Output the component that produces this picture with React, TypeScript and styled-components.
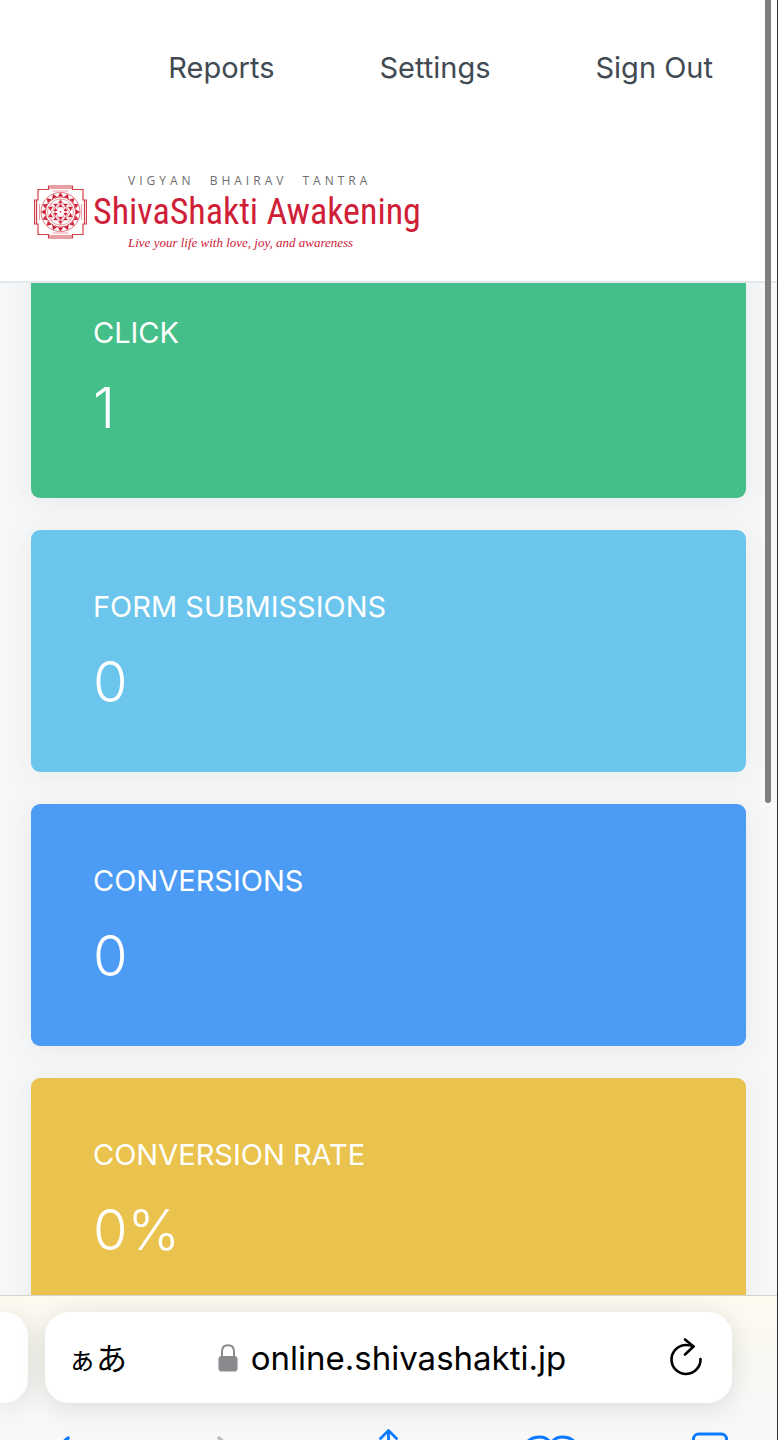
import React from "react";
import styled, { createGlobalStyle } from "styled-components";

const GlobalStyle = createGlobalStyle`
  *, *::before, *::after { box-sizing: border-box; }
  body { margin: 0; background: #f5f7f9; font-family: Inter, "Noto Sans CJK JP", sans-serif; }
  h2, p { margin: 0; font-weight: 400; }
  button { padding: 0; border: 0; background: none; font: inherit; color: inherit; }
  svg { display: block; }
`;

const Screen = styled.div`
  position: relative;
  display: flex;
  flex-direction: column;
  height: 100vh;
  overflow: hidden;
  border-right: 1px solid #2f3133;
`;

const ScrollThumb = styled.div`
  position: absolute;
  z-index: 3;
  top: 0;
  right: 6px;
  width: 6px;
  height: calc(56vh - 3px);
  border-radius: 0 0 3px 3px;
  background: #7e7e7e;
`;

const Header = styled.header`
  position: relative;
  z-index: 1;
  flex: none;
  padding: 48px 64px 30px 34px;
  background: #fff;
  border-bottom: 2px solid #e4e8ec;
`;

const Nav = styled.nav`
  display: flex;
  justify-content: flex-end;
  gap: 105px;
  margin-bottom: 85px;
`;

const NavLink = styled.a`
  color: #414a52;
  font-size: 29px;
  line-height: 40px;
  text-decoration: none;
  white-space: nowrap;
`;

const Brand = styled.a`
  display: inline-flex;
  align-items: center;
  gap: 6px;
  color: #cf2038;
  text-decoration: none;
  white-space: nowrap;
`;

const BrandText = styled.span`
  display: flex;
  flex-direction: column;
`;

const BrandTop = styled.span`
  padding-left: 35px;
  color: #6d6d6d;
  font: 12px/16px "Open Sans", sans-serif;
  letter-spacing: 4px;
  word-spacing: 8px;
`;

const BrandName = styled.span`
  font: 36px/46px "Roboto Condensed", "Liberation Sans Narrow", "Liberation Sans", sans-serif;
`;

const BrandTagline = styled.span`
  padding-left: 35px;
  font: italic 13px/16px "Liberation Serif", serif;
`;

const Main = styled.main`
  flex: 1;
  min-height: 0;
  padding: 0 31px;
  overflow: hidden;
`;

const CardList = styled.div`
  display: flex;
  flex-direction: column;
  gap: 32px;
  margin-top: -27px;
`;

const Card = styled.section<{ $tone: string }>`
  padding: 56px 62px;
  border-radius: 9px;
  background: ${(p) => p.$tone};
  box-shadow: 0 4px 28px rgba(60, 50, 50, 0.07);
  color: #fff;
`;

const CardLabel = styled.h2`
  margin-bottom: 20px;
  font-size: 29px;
  line-height: 42px;
`;

const CardValue = styled.p`
  font-size: 56px;
  font-weight: 300;
  line-height: 68px;
`;

const BrowserBar = styled.footer`
  position: relative;
  z-index: 1;
  flex: none;
  height: 145px;
  overflow: hidden;
  border-top: 1px solid #d3d3d0;
  background: linear-gradient(#fdfbf0, #f9f8f2 40%, #f8f8f8 80%);
`;

const TabStrip = styled.div`
  display: flex;
  gap: 17px;
  padding: 16px 45px 0 0;
`;

const PreviousTab = styled.div`
  flex: none;
  width: 28px;
  height: 91px;
  border-radius: 0 24px 24px 0;
  background: #fff;
  box-shadow: 0 4px 28px rgba(0, 0, 0, 0.12);
`;

const AddressField = styled.div`
  flex: 1;
  display: flex;
  align-items: center;
  justify-content: space-between;
  height: 91px;
  padding: 0 29px 0 23px;
  border-radius: 24px;
  background: #fff;
  box-shadow: 0 4px 28px rgba(0, 0, 0, 0.12);
  color: #000;
`;

const TextSizeButton = styled.button`
  display: flex;
  align-items: baseline;
  font-family: "Noto Sans CJK JP", sans-serif;
  font-size: 31px;
  line-height: 44px;
`;

const SmallKana = styled.span`
  font-size: 28px;
`;

const Address = styled.span`
  display: flex;
  align-items: center;
  gap: 13px;
  padding-right: 12px;
  font-size: 33px;
  line-height: 44px;
`;

const Toolbar = styled.div`
  display: flex;
  justify-content: space-between;
  padding: 24px 35px 0 29px;
`;

const ToolButton = styled.button<{ $disabled?: boolean }>`
  color: ${(p) => (p.$disabled ? "#bdbdbf" : "#0a7bff")};
`;

const cards = [
  { label: "CLICK", value: "1", tone: "#45bf89" },
  { label: "FORM SUBMISSIONS", value: "0", tone: "#6cc5ec" },
  { label: "CONVERSIONS", value: "0", tone: "#4c9cf5" },
  { label: "CONVERSION RATE", value: "0%", tone: "#eac34e" },
];

const petals = (count: number, inner: number, outer: number, half: number) =>
  Array.from({ length: count }, (_, i) => (
    <path
      key={i}
      d={`M${-half} ${-inner}L0 ${-outer}L${half} ${-inner}Z`}
      transform={`rotate(${(i * 360) / count})`}
    />
  ));

function Yantra() {
  return (
    <svg width="53" height="54" viewBox="-26.5 -27 53 54" fill="none" stroke="#d2404b" strokeWidth="1" aria-hidden="true">
      <path d="M-22.5-22.5H-12V-26H12V-22.5H22.5V-12H26V12H22.5V22.5H12V26H-12V22.5H-22.5V12H-26V-12H-22.5Z" strokeWidth="1.2" />
      <path d="M-12-24H12M-12 24H12M-24-12V12M24-12V12" strokeWidth="1.2" />
      <path d="M-8-21H8M-8 21H8M-21-8V8M21-8V8" strokeWidth=".5" />
      <circle r="19.5" strokeWidth=".7" />
      <circle r="15.2" strokeWidth="1" />
      <g fill="#cf2038" stroke="none">{petals(16, 15.5, 19.5, 2.6)}</g>
      <circle r="13" strokeWidth=".5" />
      <g strokeWidth=".4">
        <path d="M-12-5H12L0 13ZM-10-8H10L0 9Z" />
        <path d="M-12 5H12L0-13ZM-10 8H10L0-9Z" />
      </g>
      <g fill="#cf2038" stroke="none">
        <path d="M-2-9H2L0-12ZM-2 9H2L0 12ZM-7-8H-3L-5-5ZM7-8H3L5-5ZM-7 8H-3L-5 5ZM7 8H3L5 5ZM-12-5H-8L-10-1ZM12-5H8L10-1ZM-12 5H-8L-10 1ZM12 5H8L10 1ZM-7-1H-3L-5-4ZM7-1H3L5-4ZM-7 1H-3L-5 4ZM7 1H3L5 4ZM-2-5H2L0-8ZM-2 5H2L0 8ZM-1-1H1L0 1Z" />
      </g>
    </svg>
  );
}

const LockIcon = () => (
  <svg width="20" height="28" viewBox="0 0 20 28" aria-hidden="true">
    <path d="M4 13V7.5C4 3.5 6.4 1.2 10 1.2S16 3.5 16 7.5V13" fill="none" stroke="#8a8a8e" strokeWidth="2" />
    <rect x="0.5" y="12" width="19" height="15.5" rx="3" fill="#8a8a8e" />
  </svg>
);

const ReloadIcon = () => (
  <svg width="34" height="40" viewBox="0 0 34 40" fill="none" stroke="#000" strokeWidth="2.6" strokeLinecap="round" strokeLinejoin="round" aria-hidden="true">
    <path d="M24.5 8.500C22 7.300 19.500 7 17 7A14.500 14.500 0 1 0 31.500 21" />
    <path d="M16 1.500L24.500 8.500L16 16.500" />
  </svg>
);

export default function App() {
  return (
    <>
      <GlobalStyle />
      <Screen>
        <ScrollThumb />
        <Header>
          <Nav aria-label="Main">
            <NavLink href="#reports">Reports</NavLink>
            <NavLink href="#settings">Settings</NavLink>
            <NavLink href="#sign-out">Sign Out</NavLink>
          </Nav>
          <Brand href="#home">
            <Yantra />
            <BrandText>
              <BrandTop>VIGYAN BHAIRAV TANTRA</BrandTop>
              <BrandName>ShivaShakti Awakening</BrandName>
              <BrandTagline>Live your life with love, joy, and awareness</BrandTagline>
            </BrandText>
          </Brand>
        </Header>
        <Main>
          <CardList>
            {cards.map((card) => (
              <Card key={card.label} $tone={card.tone}>
                <CardLabel>{card.label}</CardLabel>
                <CardValue>{card.value}</CardValue>
              </Card>
            ))}
          </CardList>
        </Main>
        <BrowserBar>
          <TabStrip>
            <PreviousTab />
            <AddressField>
              <TextSizeButton type="button">
                <SmallKana>ぁ</SmallKana>あ
              </TextSizeButton>
              <Address>
                <LockIcon />
                online.shivashakti.jp
              </Address>
              <button type="button" aria-label="Reload">
                <ReloadIcon />
              </button>
            </AddressField>
          </TabStrip>
          <Toolbar>
            <ToolButton type="button" aria-label="Back">
              <svg width="64" height="48" viewBox="0 0 64 48" fill="none" stroke="currentColor" strokeWidth="3.500" strokeLinecap="round" strokeLinejoin="round">
                <path d="M39 11L24 25L39 39" />
              </svg>
            </ToolButton>
            <ToolButton type="button" aria-label="Forward" $disabled>
              <svg width="64" height="48" viewBox="0 0 64 48" fill="none" stroke="currentColor" strokeWidth="3.500" strokeLinecap="round" strokeLinejoin="round">
                <path d="M28 11L43 25L28 39" />
              </svg>
            </ToolButton>
            <ToolButton type="button" aria-label="Share">
              <svg width="64" height="48" viewBox="0 0 64 48" fill="none" stroke="currentColor" strokeWidth="2.800" strokeLinecap="round" strokeLinejoin="round">
                <path d="M34.500 30V4M26.500 11.500L34.500 3.500L42.500 11.500M27 18H19V46H50V18H42" />
              </svg>
            </ToolButton>
            <ToolButton type="button" aria-label="Bookmarks">
              <svg width="64" height="48" viewBox="0 0 64 48" fill="none" stroke="currentColor" strokeWidth="2.800" strokeLinecap="round" strokeLinejoin="round">
                <path d="M35 16C32 12 28 10 24 10C18 10 13 12.500 10 16V44C18 38 29 38 35 44C41 38 52 38 60 44V16C57 12.500 52 10 46 10C42 10 38 12 35 16ZV44" />
              </svg>
            </ToolButton>
            <ToolButton type="button" aria-label="Tabs">
              <svg width="64" height="48" viewBox="0 0 64 48" fill="none" stroke="currentColor" strokeWidth="3" strokeLinejoin="round">
                <rect x="15.500" y="7" width="33" height="33" rx="5" />
              </svg>
            </ToolButton>
          </Toolbar>
        </BrowserBar>
      </Screen>
    </>
  );
}
